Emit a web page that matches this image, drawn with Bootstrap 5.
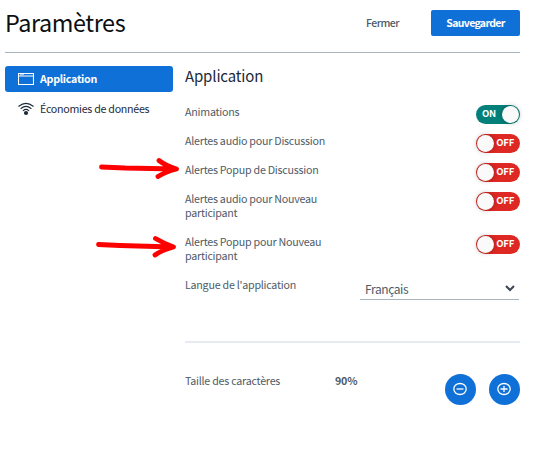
<!DOCTYPE html>
<html lang="fr">
<head>
<meta charset="utf-8">
<meta name="viewport" content="width=device-width, initial-scale=1">
<title>Paramètres</title>
<link href="https://cdn.jsdelivr.net/npm/bootstrap@5.3.0/dist/css/bootstrap.min.css" rel="stylesheet">
<script src="https://cdn.jsdelivr.net/npm/bootstrap@5.3.0/dist/js/bootstrap.bundle.min.js" defer></script>
<style>
body{font-family:"Noto Sans CJK JP","Noto Sans CJK SC","Open Sans",sans-serif;font-size:10.7px;letter-spacing:-.24px;line-height:14px;color:#4e5a66;background:#fff;overflow:hidden}
.settings{width:540px;height:469px;padding:0 20px 0 5px}
.top{height:53px;border-bottom:1px solid #a7b3bd;padding-bottom:6px}
.top h1{font-size:23.4px;letter-spacing:-.42px;line-height:34px;padding-bottom:3px;font-weight:400;color:#0c0f12}
.btn-flat{--bs-btn-padding-y:0;--bs-btn-padding-x:0;--bs-btn-font-size:10.5px;--bs-btn-border-radius:2px;--bs-btn-border-width:0;height:26px;width:89px;line-height:26px;letter-spacing:-.5px}
.btn-save{letter-spacing:-.66px}
.btn-close-text{margin-right:4px}
.btn-primary{--bs-btn-bg:#0f70d7}
.side{width:168px;margin-right:12px;padding-top:13px}
.tab{height:26px;padding:0 0 0 13px;border-radius:3px;gap:6px;color:#1b2a3a;letter-spacing:-.28px}
.tab.active{background:#0f70d7;color:#fff}
.second{margin-top:4px}
.panel{padding-top:13px}
.panel h2{font-size:15px;letter-spacing:-.15px;line-height:20px;color:#1b2a3a;font-weight:400}
.opts{padding-top:19px}
.opt{padding-bottom:15px}
.opt-label{width:160px}
.toggle{width:44px;height:19px;margin-bottom:-5px;padding:1px;border-radius:10px;color:#fff;font-size:9.5px;line-height:15px;background:#dd2823}
.toggle.on{background:#038079}
.toggle .tx{padding:0 5px 3px 0}
.toggle.on .tx{padding-left:5px}
.knob{width:17px;height:17px;flex:none;border-radius:50%;background:#fafafa;box-shadow:0 0 5px rgba(0,0,0,.3)}
.langrow{height:63px}
.lang{width:159px;height:22px;margin-right:1px;padding:0 4px 0 5px;border-bottom:1px solid #a7b3bd;font-size:12px;letter-spacing:-.4px}
.sep{height:2px;background:#e6ecf1}
.size{padding-top:31px}
.sizelabel{width:150px}
.pct{width:110px}
.circles{gap:13px}
.round{width:31px;height:31px;border-radius:50%}
.round svg{margin:0 1px 2px 0}
.arrow{position:absolute;left:0;top:0;pointer-events:none}
</style>
</head>
<body>
<main class="settings">
  <header class="top d-flex align-items-center">
    <h1 class="m-0 me-auto">Paramètres</h1>
    <button class="btn btn-flat btn-close-text fw-medium text-reset">Fermer</button>
    <button class="btn btn-primary btn-flat btn-save fw-bold">Sauvegarder</button>
  </header>
  <div class="d-flex">
    <nav class="side flex-shrink-0">
      <div class="tab active d-flex align-items-center fw-bold">
        <svg width="16" height="12" viewBox="0 0 16 12" fill="none" stroke="#fff"><path d="M.5.5h15v11H.5zM.5 3h15" stroke-width="1.1"/><path d="M2 1.7h4" stroke-width=".7"/></svg>
        <span>Application</span>
      </div>
      <div class="tab second d-flex align-items-center">
        <svg width="16" height="14" viewBox="0 0 16 14" fill="none" stroke="#1b2a3a" stroke-width="1.1" stroke-linecap="round"><path d="M.8 4.200Q8-1.500 15.200 4.200M3 6.500Q8 2.300 13 6.500M5.200 8.600Q8 6.200 10.800 8.600"/><circle cx="8" cy="11" r="2.100" fill="#1b2a3a" stroke="none"/></svg>
        <span>Économies de données</span>
      </div>
    </nav>
    <section class="panel flex-grow-1">
      <h2 class="mb-0">Application</h2>
      <div class="opts">
        <div class="opt d-flex justify-content-between"><div class="opt-label">Animations</div><div class="toggle on d-flex align-items-center justify-content-between fw-bold"><span class="tx">ON</span><span class="knob"></span></div></div>
        <div class="opt d-flex justify-content-between"><div class="opt-label">Alertes audio pour Discussion</div><div class="toggle d-flex align-items-center justify-content-between fw-bold"><span class="knob"></span><span class="tx">OFF</span></div></div>
        <div class="opt d-flex justify-content-between"><div class="opt-label">Alertes Popup de Discussion</div><div class="toggle d-flex align-items-center justify-content-between fw-bold"><span class="knob"></span><span class="tx">OFF</span></div></div>
        <div class="opt d-flex justify-content-between"><div class="opt-label">Alertes audio pour Nouveau participant</div><div class="toggle d-flex align-items-center justify-content-between fw-bold"><span class="knob"></span><span class="tx">OFF</span></div></div>
        <div class="opt d-flex justify-content-between"><div class="opt-label">Alertes Popup pour Nouveau participant</div><div class="toggle d-flex align-items-center justify-content-between fw-bold"><span class="knob"></span><span class="tx">OFF</span></div></div>
        <div class="langrow d-flex justify-content-between"><div class="opt-label">Langue de l'application</div>
          <div class="lang d-flex align-items-center justify-content-between"><span>Français</span><svg width="10" height="7" viewBox="0 0 10 7" fill="none" stroke="#3c4650" stroke-width="2"><path d="M1 1l4 4 4-4"/></svg></div></div>
      </div>
      <div class="sep"></div>
      <div class="size d-flex">
        <div class="sizelabel">Taille des caractères</div><div class="pct fw-bold">90%</div>
        <div class="circles d-flex">
          <button class="btn btn-primary round p-0 border-0 d-flex align-items-center justify-content-center" aria-label="Réduire"><svg width="14" height="14" viewBox="0 0 14 14" fill="none" stroke="#fff" stroke-width="1.3"><ellipse cx="7" cy="7" rx="6.200" ry="5.500"/><path d="M3.500 7h7"/></svg></button>
          <button class="btn btn-primary round p-0 border-0 d-flex align-items-center justify-content-center" aria-label="Agrandir"><svg width="14" height="14" viewBox="0 0 14 14" fill="none" stroke="#fff" stroke-width="1.3"><ellipse cx="7" cy="7" rx="6.200" ry="5.500"/><path d="M3.500 7h7M7 4v6"/></svg></button>
        </div>
      </div>
    </section>
  </div>
</main>
<svg class="arrow" width="190" height="270" viewBox="0 0 190 270" fill="none" stroke="#fe0000" stroke-width="4.800" stroke-linecap="round" stroke-linejoin="round"><path d="M101.500 167L125 168 176 169M159 160.500Q166 166 176.500 169Q165 172 158 176.500M98.500 244.500L120 245.500 173 247M155.500 238.500Q163 243 173.500 247Q162 250 155 255"/></svg>
</body>
</html>
